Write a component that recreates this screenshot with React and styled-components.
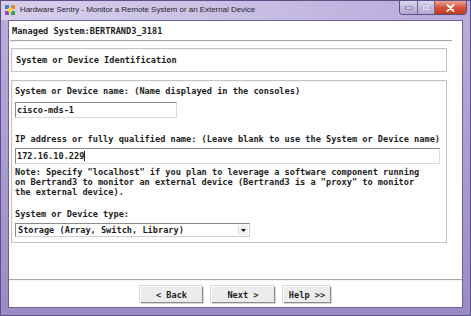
import React from "react";
import styled, { createGlobalStyle } from "styled-components";

const Global = createGlobalStyle`
  html, body { margin: 0; padding: 0; background: #ffffff; }
  body { width: 471px; height: 316px; overflow: hidden; }
  #root { width: 471px; height: 316px; }
`;

const mono = `"DejaVu Sans Mono", "Liberation Mono", monospace`;

const Window = styled.div`
  width: 471px;
  height: 316px;
  box-sizing: border-box;
  display: flex;
  flex-direction: column;
  background: linear-gradient(180deg, #cfc6e6 0px, #b9acdb 20px, #a798cf 60%, #9a8bc6 100%);
  border: 1px solid #5c5088;
`;

const TitleBar = styled.div`
  height: 19px;
  flex: 0 0 19px;
  display: flex;
  align-items: flex-start;
  background: linear-gradient(90deg, #d6cfea 0%, #cbc1e4 45%, #b7a9dc 100%);
`;

const TitleIcon = styled.svg`
  width: 12px;
  height: 12px;
  margin: 3px 0 0 3px;
  flex: 0 0 auto;
`;

const TitleText = styled.div`
  margin: 4px 0 0 4px;
  font-family: "Liberation Sans", Arial, sans-serif;
  font-size: 7.9px;
  line-height: 10px;
  color: #262330;
  white-space: nowrap;
  flex: 1 1 auto;
`;

const Controls = styled.div`
  display: flex;
  height: 13px;
  margin-right: 3px;
  border: 1px solid #5a5177;
  border-top: none;
  border-radius: 0 0 4px 4px;
  overflow: hidden;
`;

const CtrlButton = styled.div`
  width: ${(p) => p.$w}px;
  height: 13px;
  display: flex;
  align-items: center;
  justify-content: center;
  background: ${(p) =>
    p.$close
      ? "linear-gradient(180deg, #e9a493 0%, #d5553c 50%, #c43a1f 100%)"
      : "linear-gradient(180deg, #ddd7ee 0%, #c4bbe0 50%, #b2a6d6 100%)"};
  border-left: ${(p) => (p.$first ? "none" : "1px solid #6f6592")};
`;

const Client = styled.div`
  flex: 1 1 auto;
  margin: 0 7px 7px 7px;
  background: #ffffff;
  border: 1px solid #6d6294;
  display: flex;
  flex-direction: column;
  font-family: ${mono};
  font-weight: bold;
  font-size: 8.62px;
  color: #1c1c1c;
`;

const Header = styled.div`
  height: 19px;
  display: flex;
  align-items: center;
  padding-left: 3px;
  padding-top: 1px;
  box-sizing: border-box;
  white-space: nowrap;
`;

const Rule = styled.div`
  height: 1px;
  background: #a8a8a8;
  border-bottom: 1px solid #f4f4f4;
  margin: ${(p) => p.$margin || "0"};
`;

const Body = styled.div`
  flex: 1 1 auto;
  display: flex;
  flex-direction: column;
  padding: 0 15px 0 2px;
`;

const Box = styled.div`
  border: 1px solid #c4c4c4;
  box-shadow: inset 1px 1px 0 #f6f6f6;
  margin-top: ${(p) => p.$top}px;
  padding: ${(p) => p.$pad};
  display: flex;
  flex-direction: column;
`;

const Line = styled.div`
  height: 10px;
  line-height: 10px;
  white-space: pre;
  margin-top: ${(p) => p.$top || 0}px;
`;

const TextInput = styled.div`
  box-sizing: border-box;
  width: ${(p) => p.$w}px;
  height: ${(p) => p.$h || 16}px;
  margin-top: ${(p) => p.$top}px;
  border-top: 1px solid #8a8a8a;
  border-left: 1px solid #8a8a8a;
  border-right: 1px solid #dcdcdc;
  border-bottom: 1px solid #dcdcdc;
  background: #ffffff;
  padding-left: 1px;
  display: flex;
  align-items: center;
  white-space: pre;
`;

const Caret = styled.span`
  display: inline-block;
  width: 1px;
  height: 10px;
  background: #222;
`;

const Select = styled.div`
  box-sizing: border-box;
  width: 235px;
  height: 14px;
  margin-top: 4px;
  border-top: 1px solid #8a8a8a;
  border-left: 1px solid #8a8a8a;
  border-right: 1px solid #cfcfcf;
  border-bottom: 1px solid #cfcfcf;
  display: flex;
  align-items: center;
  padding-left: 2px;
`;

const SelectValue = styled.span`
  flex: 1 1 auto;
  white-space: pre;
`;

const SelectArrow = styled.div`
  width: 9px;
  height: 10px;
  margin-right: 1px;
  display: flex;
  align-items: center;
  justify-content: center;
  background: #f2f2f2;
  border-left: 1px solid #e0e0e0;
`;

const Spacer = styled.div`
  flex: 1 1 auto;
`;

const ButtonRow = styled.div`
  height: 26px;
  flex: 0 0 26px;
  display: flex;
  justify-content: center;
  align-items: flex-start;
  gap: 8px;
  padding-top: 5px;
  box-sizing: border-box;
`;

const Button = styled.div`
  box-sizing: border-box;
  width: ${(p) => p.$w}px;
  height: 17px;
  display: flex;
  align-items: center;
  justify-content: center;
  background: #ececec;
  border-top: 1px solid #ffffff;
  border-left: 1px solid #ffffff;
  border-right: 1px solid #8c8c8c;
  border-bottom: 1px solid #8c8c8c;
  box-shadow: 1px 1px 0 #d8d8d8, -1px -1px 0 #d8d8d8;
  white-space: pre;
`;

export default function App() {
  return (
    <>
      <Global />
      <Window>
        <TitleBar>
          <TitleIcon viewBox="0 0 12 12">
            <rect x="1" y="1" width="4" height="4" fill="#3b7fd4" />
            <rect x="7" y="1" width="4" height="4" fill="#e88a2a" />
            <rect x="1" y="7" width="4" height="4" fill="#8a4fc2" />
            <rect x="7" y="7" width="4" height="4" fill="#3aa24a" />
            <rect x="4" y="4" width="4" height="4" fill="#f2d23c" />
          </TitleIcon>
          <TitleText>Hardware Sentry - Monitor a Remote System or an External Device</TitleText>
          <Controls>
            <CtrlButton $w={17} $first>
              <svg width="8" height="4" viewBox="0 0 8 4">
                <rect x="0.5" y="1" width="7" height="2" fill="#ffffff" stroke="#4d4470" strokeWidth="0.6" />
              </svg>
            </CtrlButton>
            <CtrlButton $w={16}>
              <svg width="8" height="7" viewBox="0 0 8 7">
                <rect x="0.8" y="0.8" width="6.4" height="5.4" fill="none" stroke="#ffffff" strokeWidth="1.4" />
                <rect x="0.8" y="0.8" width="6.4" height="5.4" fill="none" stroke="#4d4470" strokeWidth="0.4" />
              </svg>
            </CtrlButton>
            <CtrlButton $w={31} $close>
              <svg width="9" height="8" viewBox="0 0 9 8">
                <path d="M1.5 1 L7.5 7 M7.5 1 L1.5 7" stroke="#ffffff" strokeWidth="1.8" strokeLinecap="round" />
              </svg>
            </CtrlButton>
          </Controls>
        </TitleBar>
        <Client>
          <Header>Managed System:BERTRAND3_3181</Header>
          <Rule $margin="0 10px 0 1px" />
          <Body>
            <Box $top={6} $pad="6px 4px 6px 4px">
              <Line>System or Device Identification</Line>
            </Box>
            <Box $top={8} $pad="5px 4px 5px 3px">
              <Line>System or Device name: (Name displayed in the consoles)</Line>
              <TextInput $w={162} $top={6}>cisco-mds-1</TextInput>
              <Line $top={16}>IP address or fully qualified name: (Leave blank to use the System or Device name)</Line>
              <TextInput $w={425} $top={4}>
                172.16.10.229<Caret />
              </TextInput>
              <Line $top={3}>Note: Specify "localhost" if you plan to leverage a software component running</Line>
              <Line>on Bertrand3 to monitor an external device (Bertrand3 is a "proxy" to monitor</Line>
              <Line>the external device).</Line>
              <Line $top={12}>System or Device type:</Line>
              <Select>
                <SelectValue>Storage (Array, Switch, Library)</SelectValue>
                <SelectArrow>
                  <svg width="5" height="3" viewBox="0 0 5 3">
                    <path d="M0 0 L5 0 L2.5 3 Z" fill="#111" />
                  </svg>
                </SelectArrow>
              </Select>
            </Box>
          </Body>
          <Spacer />
          <Rule />
          <ButtonRow>
            <Button $w={63}>{"< Back"}</Button>
            <Button $w={64}>{"Next >"}</Button>
            <Button $w={48}>{"Help >>"}</Button>
          </ButtonRow>
        </Client>
      </Window>
    </>
  );
}
